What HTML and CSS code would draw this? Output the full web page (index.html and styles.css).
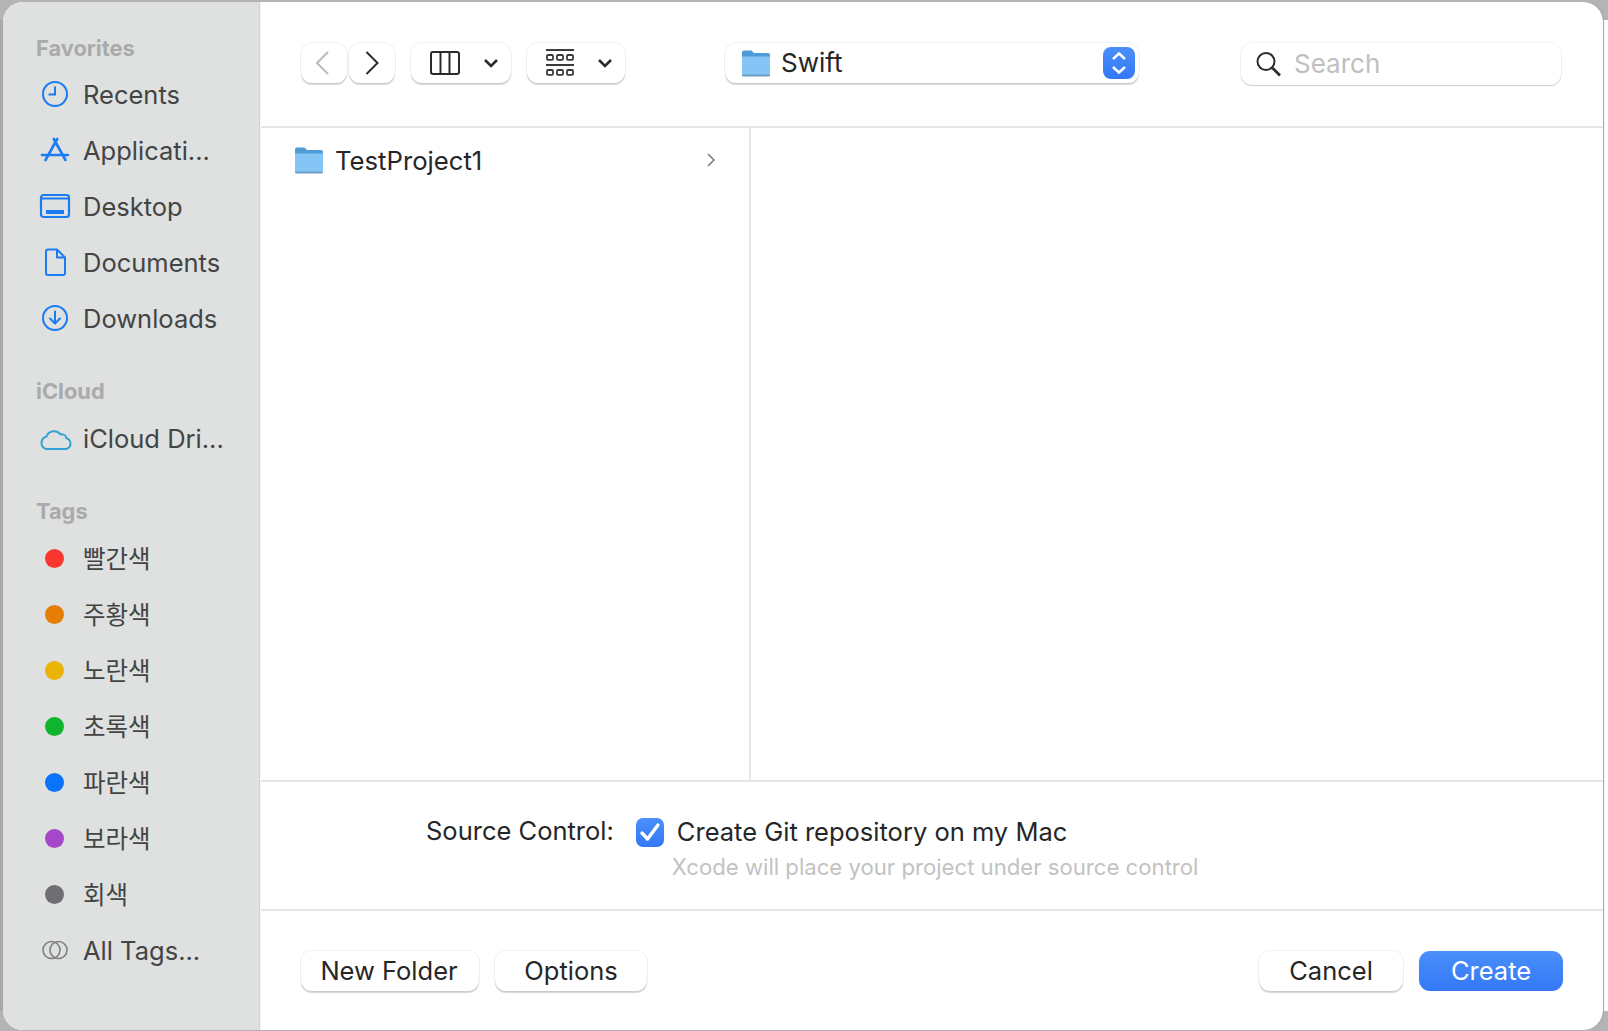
FILE: index.html
```html
<!DOCTYPE html>
<html lang="en">
<head>
<meta charset="utf-8">
<title>Save dialog</title>
<link rel="stylesheet" href="styles.css">
</head>
<body>
<div class="dialog">
  <aside class="sidebar">
    <h2 class="side-head">Favorites</h2>
    <ul class="side-list">
      <li class="side-row"><span class="side-icon"><svg width="32" height="32" viewBox="0 0 32 32" fill="none" stroke="#1a7bf2" stroke-width="2"><circle cx="16" cy="16" r="12"/><path d="M16 8.5V16.5H9.5"/></svg></span>Recents</li>
      <li class="side-row"><span class="side-icon"><svg width="32" height="32" viewBox="0 0 32 32" fill="none" stroke="#1a7bf2" stroke-width="2.6" stroke-linecap="round"><path d="M14.8 5L26.5 26M18.2 5L6.5 26M3 21H29"/></svg></span>Applicati...</li>
      <li class="side-row"><span class="side-icon"><svg width="32" height="32" viewBox="0 0 32 32" fill="none" stroke="#1a7bf2" stroke-width="2.2"><rect x="2" y="5" width="28" height="22" rx="2.5"/><path d="M2 8.5H30"/><rect x="7" y="20" width="18" height="4" fill="#1a7bf2" stroke="none"/></svg></span>Desktop</li>
      <li class="side-row"><span class="side-icon"><svg width="32" height="32" viewBox="0 0 32 32" fill="none" stroke="#1a7bf2" stroke-width="2" stroke-linejoin="round"><path d="M7 5.5A2 2 0 0 1 9 3.5H18L26 11.5V27A2 2 0 0 1 24 29H9A2 2 0 0 1 7 27Z"/><path d="M18 3.5V11.5H26"/></svg></span>Documents</li>
      <li class="side-row"><span class="side-icon"><svg width="32" height="32" viewBox="0 0 32 32" fill="none" stroke="#1a7bf2" stroke-width="2" stroke-linecap="round"><circle cx="16" cy="16" r="12"/><path d="M16 9.5V21.5M11 16.5L16 21.5L21 16.5"/></svg></span>Downloads</li>
    </ul>
    <h2 class="side-head side-head-gap">iCloud</h2>
    <ul class="side-list">
      <li class="side-row"><span class="side-icon"><svg width="34" height="26" viewBox="0 0 34 26" fill="none" stroke="#34a0d6" stroke-width="2"><path d="M8 24H27A5.5 5.5 0 0 0 28.5 13.2A5 5 0 0 0 22.5 9.5A8 8 0 0 0 8.5 11.5A6.5 6.5 0 0 0 8 24Z"/></svg></span>iCloud Dri...</li>
    </ul>
    <h2 class="side-head side-head-gap">Tags</h2>
    <ul class="side-list">
      <li class="side-row"><span class="side-icon"><span class="dot dot-red"></span></span><span class="ko">빨간색</span></li>
      <li class="side-row"><span class="side-icon"><span class="dot dot-orange"></span></span><span class="ko">주황색</span></li>
      <li class="side-row"><span class="side-icon"><span class="dot dot-yellow"></span></span><span class="ko">노란색</span></li>
      <li class="side-row"><span class="side-icon"><span class="dot dot-green"></span></span><span class="ko">초록색</span></li>
      <li class="side-row"><span class="side-icon"><span class="dot dot-blue"></span></span><span class="ko">파란색</span></li>
      <li class="side-row"><span class="side-icon"><span class="dot dot-purple"></span></span><span class="ko">보라색</span></li>
      <li class="side-row"><span class="side-icon"><span class="dot dot-gray"></span></span><span class="ko">회색</span></li>
      <li class="side-row"><span class="side-icon"><svg width="28" height="20" viewBox="0 0 28 20" fill="none" stroke="#7d7f80" stroke-width="1.6"><circle cx="10.5" cy="10" r="8.5"/><circle cx="17.5" cy="10" r="8.5"/></svg></span>All Tags...</li>
    </ul>
  </aside>
  <main class="main">
    <header class="toolbar">
      <div class="nav-pair">
        <button class="btn btn-nav"><svg width="16" height="26" viewBox="0 0 16 26" fill="none" stroke="#bcbcbc" stroke-width="2"><path d="M12 2L1 13L12 24"/></svg></button>
        <button class="btn btn-nav"><svg width="16" height="26" viewBox="0 0 16 26" fill="none" stroke="#2b2b2b" stroke-width="2"><path d="M2.5 2L13.5 13L2.5 24"/></svg></button>
      </div>
      <button class="btn btn-view"><svg width="30" height="24" viewBox="0 0 30 24" fill="none" stroke="#2b2b2b" stroke-width="2"><rect x="1" y="1" width="28" height="22" rx="2"/><path d="M10.5 1V23M19.5 1V23"/></svg><svg class="chev" width="16" height="10" viewBox="0 0 16 10" fill="none" stroke="#2b2b2b" stroke-width="2.6"><path d="M2 2L8 8L14 2"/></svg></button>
      <button class="btn btn-group"><svg width="28" height="28" viewBox="0 0 28 28" fill="none" stroke="#3a3a3a" stroke-width="1.8"><path d="M0 1H28M0 16H28"/><rect x="1" y="6" width="6" height="4.8" rx="1"/><rect x="11" y="6" width="6" height="4.8" rx="1"/><rect x="21" y="6" width="6" height="4.8" rx="1"/><rect x="1" y="21" width="6" height="4.8" rx="1"/><rect x="11" y="21" width="6" height="4.8" rx="1"/><rect x="21" y="21" width="6" height="4.8" rx="1"/></svg><svg class="chev" width="16" height="10" viewBox="0 0 16 10" fill="none" stroke="#2b2b2b" stroke-width="2.6"><path d="M2 2L8 8L14 2"/></svg></button>
      <div class="path-popup">
        <svg class="folder" width="30" height="28" viewBox="0 0 30 28"><path d="M1 3.5A2 2 0 0 1 3 1.5H10.5L13 4H27A2 2 0 0 1 29 6V12H1Z" fill="#4d9cd8"/><path d="M1 7.5H29V25A2 2 0 0 1 27 27H3A2 2 0 0 1 1 25Z" fill="#84c5f5"/><path d="M1 25.5H29V26A1.5 1.5 0 0 1 27.5 27.5H2.5A1.5 1.5 0 0 1 1 26Z" fill="#6d9fc4"/></svg>
        <span class="path-name">Swift</span>
        <span class="stepper"><svg width="18" height="26" viewBox="0 0 18 26" fill="none" stroke="#fff" stroke-width="2.4"><path d="M3 9L9 3.5L15 9M3 17L9 22.5L15 17"/></svg></span>
      </div>
      <div class="search">
        <svg width="26" height="26" viewBox="0 0 26 26" fill="none" stroke="#2b2b2b" stroke-width="2"><circle cx="10" cy="10.5" r="8.5"/><path d="M16.5 17L24 24.5" stroke-width="2.6"/></svg>
        <span class="search-text">Search</span>
      </div>
    </header>
    <section class="browser">
      <div class="column">
        <div class="file-row">
          <svg class="folder" width="30" height="28" viewBox="0 0 30 28"><path d="M1 3.5A2 2 0 0 1 3 1.5H10.5L13 4H27A2 2 0 0 1 29 6V12H1Z" fill="#4d9cd8"/><path d="M1 7.5H29V25A2 2 0 0 1 27 27H3A2 2 0 0 1 1 25Z" fill="#84c5f5"/><path d="M1 25.5H29V26A1.5 1.5 0 0 1 27.5 27.5H2.5A1.5 1.5 0 0 1 1 26Z" fill="#6d9fc4"/></svg>
          <span class="file-name">TestProject1</span>
          <svg class="disclosure" width="10" height="16" viewBox="0 0 10 16" fill="none" stroke="#7c7c7c" stroke-width="1.6"><path d="M2 2L8 8L2 14"/></svg>
        </div>
      </div>
      <div class="preview"></div>
    </section>
    <section class="options">
      <span class="opt-label">Source Control:</span>
      <div class="opt-body">
        <div class="check-line">
          <span class="checkbox"><svg width="22" height="20" viewBox="0 0 22 20" fill="none" stroke="#fff" stroke-width="3.4" stroke-linecap="round" stroke-linejoin="round"><path d="M3 11L8.5 17L19 3"/></svg></span>
          <span class="check-text">Create Git repository on my Mac</span>
        </div>
        <p class="hint">Xcode will place your project under source control</p>
      </div>
    </section>
    <footer class="footer">
      <button class="btn btn-text btn-newfolder">New Folder</button>
      <button class="btn btn-text btn-options">Options</button>
      <span class="footer-space"></span>
      <button class="btn btn-text btn-cancel">Cancel</button>
      <button class="btn btn-text btn-create">Create</button>
    </footer>
  </main>
</div>
</body>
</html>
```
FILE: styles.css
```css
* { box-sizing: border-box; }
html, body { margin: 0; height: 100%; }
body {
  background:
    linear-gradient(#b4b4b4, #b4b4b4) left top / 100% 20px no-repeat,
    linear-gradient(#b4b4b4, #b4b4b4) left bottom / 100% 20px no-repeat,
    linear-gradient(#a9a9a9, #a9a9a9) left top / 10px 100% no-repeat,
    #fff;
  overflow: hidden;
  font-family: Inter, "Noto Sans CJK KR", sans-serif;
}
.dialog {
  width: 1600px;
  height: 1028px;
  margin: 2px 0 0 3px;
  display: flex;
  border-radius: 20px;
  overflow: hidden;
  background: #fff;
  box-shadow: 1px 0 1px #a0a0a0;
}
.sidebar {
  width: 257px;
  flex: none;
  background: #dfe0e0;
  border-right: 1px solid #d2d2d2;
  padding: 30px 0 0 33px;
  color: #434545;
}
.side-head {
  margin: 0 0 2px;
  font-size: 21.8px;
  line-height: 32px;
  font-weight: 700;
  color: #a9abab;
}
.side-head-gap { margin: 29px 0 3px; }
.side-list { list-style: none; margin: 0; padding: 0; }
.side-row {
  display: flex;
  align-items: center;
  height: 56px;
  font-size: 25.5px;
  white-space: nowrap;
}
.side-icon {
  width: 47px;
  padding-right: 10px;
  display: flex;
  flex: none;
  justify-content: center;
  align-items: center;
}
.ko { font-family: "Noto Sans CJK KR", sans-serif; font-size: 24.5px; margin-top: -2px; }
.dot { width: 19px; height: 19px; border-radius: 50%; }
.dot-red { background: #fb3630; }
.dot-orange { background: #e67e06; }
.dot-yellow { background: #e9b405; }
.dot-green { background: #10b52f; }
.dot-blue { background: #0a72fb; }
.dot-purple { background: #a447c8; }
.dot-gray { background: #6e6e73; }
.main {
  flex: 1;
  min-width: 0;
  display: flex;
  flex-direction: column;
  border-left: 1px solid #f6f6f6;
  color: #262626;
}
.toolbar {
  height: 126px;
  flex: none;
  display: flex;
  align-items: flex-start;
  padding: 41px 0 0 40px;
  border-bottom: 2px solid #e6e6e6;
}
.btn {
  border: 0;
  padding: 0;
  background: #fff;
  border-radius: 11px;
  height: 40px;
  display: flex;
  align-items: center;
  justify-content: center;
  box-shadow: 0 0 0 1px rgba(0,0,0,.05), 0 2px 1px rgba(0,0,0,.16);
  color: #262626;
  font-family: inherit;
}
.nav-pair { display: flex; gap: 2px; }
.btn-nav { width: 46px; }
.btn-view { width: 100px; margin-left: 16px; justify-content: flex-start; padding-left: 19px; }
.btn-group { width: 98px; margin-left: 16px; justify-content: flex-start; padding-left: 19px; }
.chev { margin-left: 23px; }
.path-popup {
  width: 414px;
  height: 40px;
  margin-left: 100px;
  background: #fff;
  border-radius: 11px;
  display: flex;
  align-items: center;
  padding-left: 16px;
  box-shadow: 0 0 0 1px rgba(0,0,0,.05), 0 2px 1px rgba(0,0,0,.16);
}
.path-name { margin: 0 0 2px 10px; font-size: 26px; flex: 1; }
.stepper {
  width: 32px;
  height: 32px;
  margin-right: 4px;
  border-radius: 8px;
  background: linear-gradient(#4a8ffa, #3478f6);
  display: flex;
  align-items: center;
  justify-content: center;
}
.search {
  width: 320px;
  height: 42px;
  margin-left: 102px;
  border-radius: 11px;
  background: #fff;
  display: flex;
  align-items: center;
  padding-left: 15px;
  box-shadow: 0 0 0 1px rgba(0,0,0,.04), 0 1px 1px rgba(0,0,0,.16);
}
.search-text { margin: 0 0 2px 12px; font-size: 26px; color: #bfbfbf; }
.browser { height: 654px; flex: none; display: flex; border-bottom: 2px solid #e6e6e6; }
.column { width: 490px; flex: none; border-right: 2px solid #e6e6e6; padding: 16px 0 0 33px; }
.file-row { display: flex; align-items: center; height: 32px; }
.file-name { margin-left: 11px; font-size: 25.7px; flex: 1; }
.disclosure { margin-right: 33px; }
.preview { flex: 1; }
.options { height: 129px; flex: none; display: flex; border-bottom: 2px solid #e6e6e6; }
.opt-label { margin: 32px 0 0 165px; font-size: 25.5px; line-height: 34px; white-space: nowrap; }
.opt-body { margin-left: 22px; padding-top: 33px; }
.check-line { display: flex; align-items: center; }
.checkbox {
  width: 28px;
  height: 29px;
  border-radius: 7px;
  background: linear-gradient(#4a8ffa, #3478f6);
  display: flex;
  align-items: center;
  justify-content: center;
}
.check-text { margin-left: 13px; font-size: 25.5px; line-height: 34px; }
.hint { margin: 3px 0 0 36px; font-size: 22.15px; line-height: 30px; color: #c2c2c2; white-space: nowrap; }
.footer { flex: 1; display: flex; align-items: flex-start; padding: 40px 40px 0 40px; }
.btn-text { font-size: 25.5px; padding-bottom: 2px; }
.btn-newfolder { width: 178px; padding-right: 2px; }
.btn-options { width: 152px; margin-left: 16px; }
.footer-space { flex: 1; }
.btn-cancel { width: 144px; }
.btn-create {
  width: 144px;
  margin-left: 16px;
  color: #fff;
  background: linear-gradient(#4a8ffa, #3478f6);
  box-shadow: none;
}
```
